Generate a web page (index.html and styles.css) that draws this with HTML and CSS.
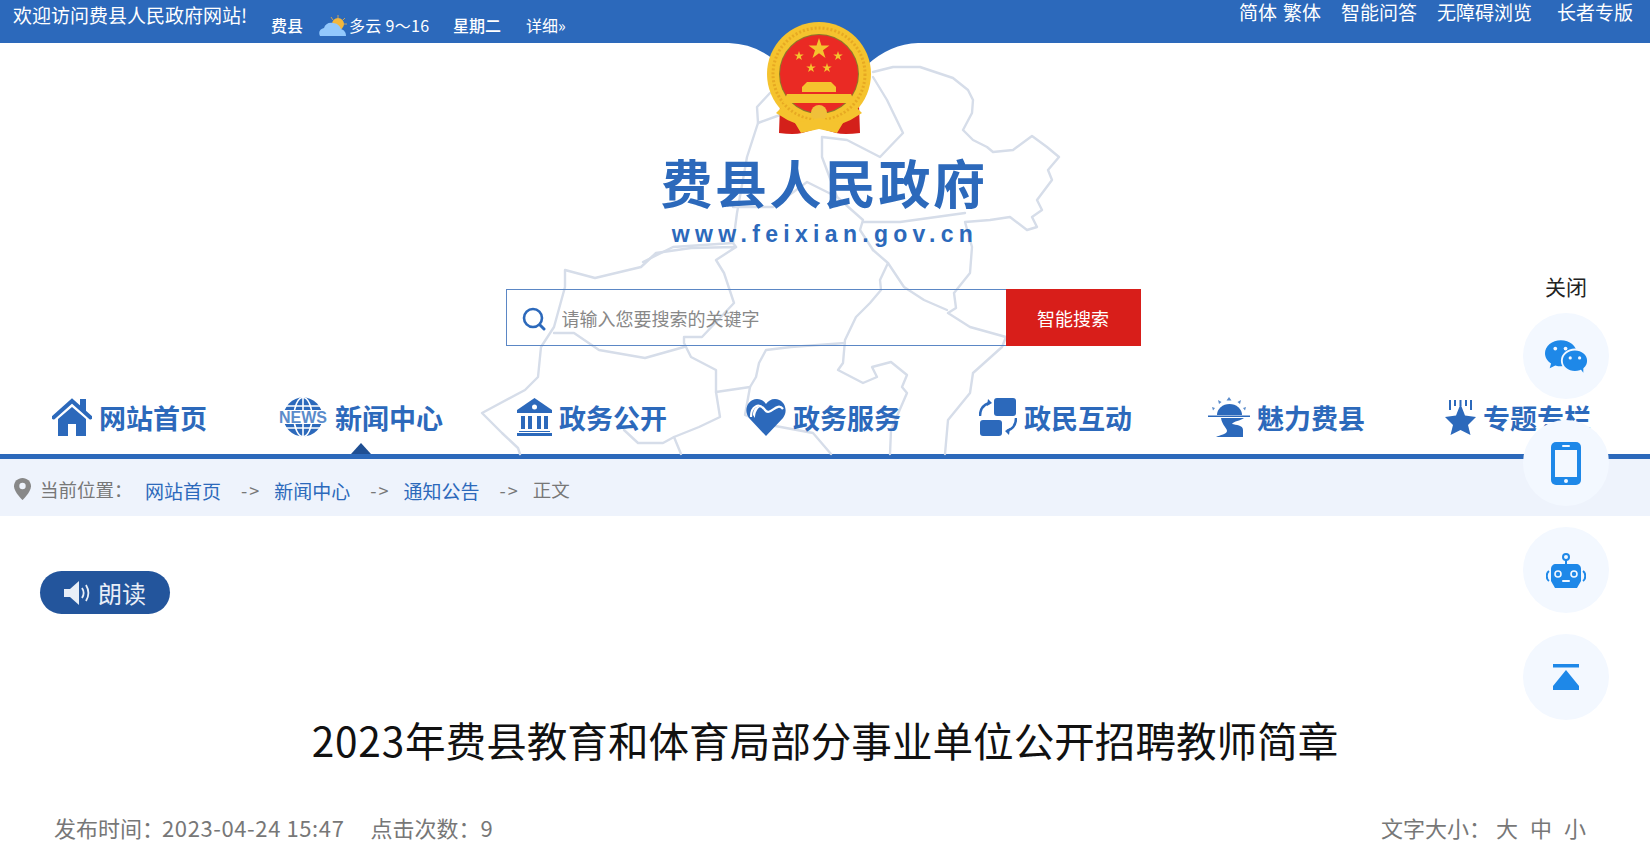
FILE: index.html
```html
<!DOCTYPE html>
<html lang="zh-CN">
<head>
  <meta charset="UTF-8">
  <title>2023年费县教育和体育局部分事业单位公开招聘教师简章</title>
  <link rel="stylesheet" href="styles.css">
</head>
<body>
  <svg class="defs" width="0" height="0">
    <defs>
      <polygon id="star" points="0,-1 .225,-.309 .951,-.309 .363,.118 .588,.809 0,.382 -.588,.809 -.363,.118 -.951,-.309 -.225,-.309"/>
    </defs>
  </svg>

  <div class="topbar">
    <div class="topbar-left">
      <span class="welcome">欢迎访问费县人民政府网站!</span>
      <div class="weather">
        <span class="bold-ish city">费县</span>
        <svg class="cloud" viewBox="0 0 28 21">
          <g stroke="#c9a35a" stroke-width="1"><path d="M19 0v3M12 2l2 3M26 3l-2 2M28 9h-3"/></g>
          <circle cx="19" cy="9" r="6" fill="#f4b73c"/>
          <path d="M1 21c-2-4 0-7 4-8 1-4 5-6 9-5 4 0 7 3 8 6 3 1 5 3 5 7z" fill="#93c8fc"/>
        </svg>
        <span class="temp">多云 9～16</span>
        <span class="bold-ish week">星期二</span>
        <span class="more">详细»</span>
      </div>
    </div>
    <div class="topbar-right">
      <a class="lang">简体</a>
      <a class="lang-last">繁体</a>
      <a class="tool">智能问答</a>
      <a class="tool">无障碍浏览</a>
      <a class="tool elder">长者专版</a>
    </div>
  </div>

  <header class="masthead">
    <svg class="map" viewBox="0 0 700 420">
      <g fill="none" stroke="#d6dde9" stroke-width="2.4" stroke-linejoin="round" stroke-linecap="round" transform="translate(-450 -43)">
        <polyline points="873,72 893,67 920,67 953,78 968,90 973,100 972,113 963,130 973,140 987,147 993,152 1013,150 1032,136 1047,147 1059,157 1048,170 1052,180 1037,200 1042,210 1032,217 1037,227 1027,230 1010,217 990,220 965,222 972,247 970,273 954,293 956,308 948,313 970,327 1006,337 1002,347 973,373 970,393 948,420 945,454"/>
        <polyline points="873,250 888,263 904,287 924,300 947,310"/>
        <polyline points="888,263 880,280 881,290 870,303 856,317 845,340 843,363 838,370 863,383 877,377 872,367 891,362 907,375 902,387 907,393 891,430 890,454"/>
        <polyline points="845,343 791,347 766,350 759,363 756,377 750,387 716,392 716,370 691,357 684,343 684,337 702,337 734,303 724,273 716,260 736,247 691,248 656,253 641,267 595,278 565,270 565,287 554,327 541,347 538,377 525,390 482,413 502,433 518,448 520,454"/>
        <polyline points="554,333 574,333 599,350 645,358 684,347"/>
        <polyline points="716,392 720,417 699,427 674,437 681,454"/>
        <polyline points="624,430 638,443 663,443 674,437"/>
        <polyline points="750,387 745,415 770,425 813,433 831,454"/>
        <polyline points="770,93 757,107 758,123 747,157 737,213 733,243 736,247"/>
        <polyline points="643,262 673,247 733,243"/>
        <polyline points="758,123 780,115"/>
        <polyline points="873,77 887,100 903,133 880,157 847,140 822,137 822,157 837,197 863,220 860,230 873,250"/>
        <polyline points="733,207 773,207 807,182 837,197"/>
        <polyline points="863,222 900,222 965,213"/>
      </g>
    </svg>

    <svg class="emblem" viewBox="0 0 200 125">
      <path d="M5 28Q31 29 50 45L60 28Z" fill="#2c69bb"/>
      <path d="M194 28Q166 29 143 50L130 28Z" fill="#2c69bb"/>
      <path d="M56 90L135 90L136 118Q120 120 112 118L95 113L78 118Q70 120 55 118Z" fill="#d4201a"/>
      <circle cx="95" cy="59" r="52" fill="#f5c32e"/>
      <circle cx="95" cy="59" r="46" fill="none" stroke="#e7a923" stroke-width="3" stroke-dasharray="2 2"/>
      <circle cx="95" cy="59" r="40" fill="#8b7a2a"/>
      <circle cx="95" cy="59" r="39" fill="#ea2a24"/>
      <g fill="#f5c32e">
        <use href="#star" transform="translate(95 34) scale(11)"/>
        <use href="#star" transform="translate(75 41) scale(5)"/>
        <use href="#star" transform="translate(114 41) scale(5)"/>
        <use href="#star" transform="translate(87 53) scale(5)"/>
        <use href="#star" transform="translate(103 53) scale(5)"/>
        <path d="M83 67h24l5 5v5H78v-5z"/>
        <path d="M63 79h64l4 9H59z"/>
      </g>
      <path d="M58 92Q95 120 132 92L138 98Q95 128 52 98Z" fill="#f5c32e"/>
      <circle cx="95" cy="98" r="8" fill="#f0c03a"/>
      <path d="M71 108L95 103L119 108L113 118L95 114L77 118Z" fill="#f5c32e"/>
    </svg>

    <h1 class="site-name">费县人民政府</h1>
    <p class="site-url">www.feixian.gov.cn</p>

    <form class="search">
      <svg class="search-icon" viewBox="0 0 24 24">
        <circle cx="11" cy="11" r="9" fill="none" stroke="#2c69bb" stroke-width="2.6"/>
        <path d="M18 18l4 4" stroke="#2c69bb" stroke-width="3" stroke-linecap="round"/>
      </svg>
      <input class="search-input" type="text" placeholder="请输入您要搜索的关键字">
      <button class="search-btn" type="button">智能搜索</button>
    </form>

    <nav class="nav">
      <a class="nav-item">
        <svg class="nav-icon" width="40" height="38" viewBox="0 0 40 38">
          <rect x="28" y="1" width="6" height="12" fill="#2c69bb"/>
          <path d="M1.500 19.500L20 3L38.500 19.500" fill="none" stroke="#2c69bb" stroke-width="4" stroke-linecap="round"/>
          <path d="M6 21L20 9L34 21V38H24V26H16V38H6Z" fill="#2c69bb"/>
        </svg>
        网站首页
      </a>
      <a class="nav-item active">
        <svg class="nav-icon news-icon" width="50" height="40" viewBox="0 0 50 40">
          <circle cx="25" cy="20" r="19.500" fill="#2c69bb"/>
          <g fill="none" stroke="#fff" stroke-width="1.600">
            <ellipse cx="25" cy="20" rx="9" ry="19.500"/>
            <path d="M25 0V40M7 9H43M7 31H43"/>
          </g>
          <rect x="0" y="13" width="50" height="14" fill="#fff"/>
          <text class="news-text" x="25" y="26" textLength="48" lengthAdjust="spacingAndGlyphs">NEWS</text>
        </svg>
        新闻中心
      </a>
      <a class="nav-item">
        <svg class="nav-icon" width="35" height="38" viewBox="0 0 35 38">
          <path d="M17.500 0L35 12V15H0V12Z" fill="#2c69bb"/>
          <circle cx="17.500" cy="9" r="2.500" fill="#fff"/>
          <path d="M4 18h4v13H4zM11 18h4v13h-4zM20 18h4v13h-4zM27 18h4v13h-4zM2 33h31v1H2zM0 35h35v3H0z" fill="#2c69bb"/>
        </svg>
        政务公开
      </a>
      <a class="nav-item">
        <svg class="nav-icon" width="40" height="38" viewBox="0 0 40 38">
          <path d="M20 38L3 20C-3 12 2 1 11 1C15 1 18 3 20 6C22 3 25 1 29 1C38 1 43 12 37 20Z" fill="#2c69bb"/>
          <path d="M5 19C5 8 13 4 19 12C24 19 31 3 37 11" fill="none" stroke="#fff" stroke-width="2.200"/>
          <path d="M7 17C7 11 10 8 14 9C11 11 9 15 9 20Z" fill="#fff"/>
        </svg>
        政务服务
      </a>
      <a class="nav-item">
        <svg class="nav-icon" width="38" height="38" viewBox="0 0 38 38">
          <rect x="15" y="0" width="22" height="18" rx="3" fill="#2c69bb"/>
          <rect x="1" y="22" width="22" height="16" rx="3" fill="#2c69bb"/>
          <path d="M1 18C1 12 4 7 10 5" fill="none" stroke="#2c69bb" stroke-width="2.500"/>
          <path d="M9 1l4 4-5 3z" fill="#2c69bb"/>
          <path d="M37 20C37 27 34 31 28 33" fill="none" stroke="#2c69bb" stroke-width="2.500"/>
          <path d="M30 37l-4-4 5-3z" fill="#2c69bb"/>
        </svg>
        政民互动
      </a>
      <a class="nav-item">
        <svg class="nav-icon" width="42" height="41" viewBox="0 0 42 41">
          <path d="M9 18A12.500 11 0 0 1 34 18Z" fill="#2c69bb"/>
          <path d="M0 18.500H42V20H0Z" fill="#2c69bb"/>
          <path d="M13 21H36C32 24 26 24 24 27C28 28 35 28 35 33V40H8C12 38 19 37 19 34C19 31 14 28 13 21Z" fill="#2c69bb"/>
          <path d="M21 0l2.500 3.500h-5zM10 3l3.500 2-2.500 2zM33 3l-3.500 2 2.500 2zM4 10l3 1-2 2.500zM38 10l-3 1 2 2.500z" fill="#5b8ccb"/>
        </svg>
        魅力费县
      </a>
      <a class="nav-item">
        <svg class="nav-icon" width="31" height="38" viewBox="0 0 31 38">
          <path d="M15.500 6L20 17.500L31 19L23 27L25.500 37L15.500 32L5.500 37L8 27L0 19L11 17.500Z" fill="#2c69bb"/>
          <path d="M4 2h2v10H4zM14.500 2h2v6h-2zM25 2h2v10h-2zM9 2h2v6H9zM20 2h2v6h-2z" fill="#2c69bb"/>
        </svg>
        专题专栏
      </a>
    </nav>
    <span class="nav-arrow"></span>
  </header>

  <div class="crumbs">
    <svg class="pin" viewBox="0 0 17 22">
      <path d="M8.500 0C3.800 0 0 3.600 0 8.200C0 14 8.500 22 8.500 22S17 14 17 8.200C17 3.600 13.200 0 8.500 0Z" fill="#888"/>
      <circle cx="8.500" cy="8" r="3.200" fill="#eef3fc"/>
    </svg>
    <span class="crumb-label">当前位置：</span>
    <a class="crumb-link">网站首页</a>
    <span class="crumb-sep">-&gt;</span>
    <a class="crumb-link">新闻中心</a>
    <span class="crumb-sep">-&gt;</span>
    <a class="crumb-link">通知公告</a>
    <span class="crumb-sep">-&gt;</span>
    <span class="crumb-now">正文</span>
  </div>

  <main class="article">
    <button class="read-btn" type="button">
      <svg class="read-icon" width="28" height="24" viewBox="0 0 28 24">
        <path d="M0 8H6L15 0V24L6 16H0Z" fill="#e8eef7"/>
        <path d="M18 7C20 10 20 14 18 17M22 4C25 9 25 15 22 20" fill="none" stroke="#e8eef7" stroke-width="1.800"/>
      </svg>
      朗读
    </button>
    <h2 class="article-title"><span class="title-year">2023</span>年费县教育和体育局部分事业单位公开招聘教师简章</h2>
    <div class="article-meta">
      <div class="meta-left">
        <span>发布时间：<span class="meta-date">2023-04-24 15:47</span></span>
        <span>点击次数：9</span>
      </div>
      <div class="meta-right">
        <span class="size-label">文字大小：</span>
        <a>大</a>
        <a>中</a>
        <a>小</a>
      </div>
    </div>
  </main>

  <aside class="side">
    <div class="side-close">关闭</div>
    <a class="side-btn">
      <svg width="43" height="33" viewBox="0 0 46 35">
        <path d="M17 0C7.600 0 0 6 0 14C0 18.500 2.500 22.500 6.500 25L5 30L11 27C13 27.600 15 28 17 28C27 28 34 21 34 14C34 6 26.400 0 17 0Z" fill="#1e88e8"/>
        <ellipse cx="32" cy="22" rx="14" ry="12" fill="#1e88e8" stroke="#f3f8ff" stroke-width="2"/>
        <path d="M38 31l3 4 0-6z" fill="#1e88e8"/>
        <circle cx="11" cy="9" r="2" fill="#f3f8ff"/>
        <circle cx="22" cy="9" r="2" fill="#f3f8ff"/>
        <circle cx="27" cy="19" r="1.700" fill="#f3f8ff"/>
        <circle cx="37" cy="19" r="1.700" fill="#f3f8ff"/>
      </svg>
    </a>
    <a class="side-btn">
      <svg width="30" height="43" viewBox="0 0 30 43">
        <rect width="30" height="43" rx="5" fill="#1e88e8"/>
        <rect x="4" y="8" width="22" height="27" fill="#f3f8ff"/>
        <rect x="11" y="3" width="8" height="2" rx="1" fill="#f3f8ff"/>
        <circle cx="15" cy="39" r="2" fill="#f3f8ff"/>
      </svg>
    </a>
    <a class="side-btn">
      <svg width="40" height="35" viewBox="0 0 40 35">
        <circle cx="20" cy="4" r="3" fill="none" stroke="#1e88e8" stroke-width="2"/>
        <path d="M20 7V12" stroke="#1e88e8" stroke-width="2"/>
        <path d="M10 11H30C33 11 35 13 35 16V28L31 35H9L5 28V16C5 13 7 11 10 11Z" fill="#1e88e8"/>
        <path d="M3 18C0 20 0 26 3 28M37 18C40 20 40 26 37 28" fill="none" stroke="#1e88e8" stroke-width="2"/>
        <circle cx="12" cy="21" r="3" fill="#1e88e8" stroke="#f3f8ff" stroke-width="1.600"/>
        <circle cx="28" cy="21" r="3" fill="#1e88e8" stroke="#f3f8ff" stroke-width="1.600"/>
        <rect x="16" y="27" width="8" height="2" rx="1" fill="#f3f8ff"/>
      </svg>
    </a>
    <a class="side-btn">
      <svg width="26" height="26" viewBox="0 0 26 26">
        <rect width="26" height="3.500" fill="#1e88e8"/>
        <path d="M13 6L26 22V26H0V22Z" fill="#1e88e8"/>
      </svg>
    </a>
  </aside>
</body>
</html>
```

FILE: styles.css
```css
:root {
  --blue: #2c69bb;
  --grey: #777;
}

* {
  box-sizing: border-box;
  margin: 0;
  padding: 0;
}

html, body {
  height: 855px;
  overflow: hidden;
}

body {
  font-family: "Noto Sans CJK SC", "Noto Sans", sans-serif;
  background-color: #fff;
  color: #222;
  position: relative;
}

.defs {
  position: absolute;
}

/* top bar */
.topbar {
  height: 43px;
  background-color: var(--blue);
  color: #fff;
  display: flex;
  justify-content: space-between;
  position: relative;
  z-index: 1;
}

.topbar-left {
  display: flex;
  padding-left: 13px;
}

.welcome {
  font-size: 19px;
  line-height: 30px;
  width: 258px;
}

.weather {
  display: flex;
  align-items: center;
  font-size: 16px;
  height: 21px;
  margin-top: 14px;
}

.bold-ish {
  font-weight: 500;
}

.city {
  width: 48px;
}

.cloud {
  width: 28px;
  height: 21px;
  margin-right: 2px;
  margin-top: 2px;
}

.temp {
  width: 104px;
  letter-spacing: .3px;
}

.week {
  width: 73px;
}

.topbar-right {
  display: flex;
  font-size: 19px;
  line-height: 24px;
  padding-right: 16px;
}

.lang {
  margin-right: 6px;
}

.lang-last {
  margin-right: 20px;
}

.tool {
  margin-right: 20px;
}

.tool.elder {
  margin-left: 5px;
  margin-right: 1px;
}

/* header */
.masthead {
  height: 411px;
  position: relative;
  display: flex;
  flex-direction: column;
  align-items: center;
}

.map {
  position: absolute;
  left: 450px;
  top: 0;
  width: 700px;
  height: 420px;
  filter: blur(.6px);
}

.emblem {
  position: absolute;
  left: 724px;
  top: -28px;
  width: 200px;
  height: 125px;
  z-index: 2;
}

.site-name {
  position: relative;
  margin-top: 109px;
  font-size: 52px;
  line-height: 60px;
  font-weight: 700;
  letter-spacing: 2.5px;
  color: var(--blue);
  transform: translateX(-1px);
}

.site-url {
  position: relative;
  margin-top: 7px;
  font-family: "Liberation Sans", sans-serif;
  font-size: 23px;
  line-height: 30px;
  font-weight: 700;
  letter-spacing: 5.3px;
  color: var(--blue);
}

.search {
  position: relative;
  display: flex;
  align-items: center;
  width: 635px;
  height: 57px;
  margin-top: 40px;
  margin-left: -4px;
  border: 1px solid #5b87c5;
  padding-left: 15px;
}

.search-icon {
  width: 24px;
  height: 24px;
  flex: none;
  margin-top: 2px;
}

.search-input {
  flex: 1;
  min-width: 0;
  height: 100%;
  border: none;
  outline: none;
  background: transparent;
  padding-left: 16px;
  font-family: inherit;
  font-size: 18px;
}

.search-input::placeholder {
  color: #888;
  opacity: 1;
}

.search-btn {
  width: 135px;
  height: 57px;
  margin: -1px;
  border: none;
  background-color: #d81e1a;
  color: #fff;
  font-family: inherit;
  font-size: 18px;
}

.nav {
  position: relative;
  width: 100%;
  margin-top: auto;
  padding: 0 0 17px 52px;
  display: grid;
  grid-template-columns: 226px 239px 229px 233px 229px 237px auto;
  align-items: center;
}

.nav-item {
  display: flex;
  align-items: center;
  gap: 7px;
  height: 40px;
  font-size: 27px;
  font-weight: 700;
  color: var(--blue);
}

.nav-icon {
  flex: none;
}

.news-icon {
  overflow: visible;
}

.news-text {
  font-family: "Liberation Sans", sans-serif;
  font-size: 17px;
  fill: #5b8ccb;
  text-anchor: middle;
}

.nav-arrow {
  position: absolute;
  left: 351px;
  bottom: 0;
  border-left: 10px solid transparent;
  border-right: 10px solid transparent;
  border-bottom: 11px solid #1f4f93;
}

/* breadcrumb */
.crumbs {
  height: 62px;
  border-top: 5px solid var(--blue);
  background-color: #eef3fc;
  display: flex;
  align-items: center;
  padding: 5px 0 0 14px;
  font-size: 19px;
  color: var(--grey);
}

.pin {
  width: 17px;
  height: 22px;
  margin-right: 9px;
  margin-top: -3px;
}

.crumb-label {
  width: 105px;
  font-size: 18.5px;
  margin-top: -3px;
}

.crumb-link {
  color: var(--blue);
}

.crumb-sep {
  margin: 0 13px 0 20px;
  font-size: 18px;
  letter-spacing: 2px;
}

.crumb-now {
  margin-top: -2px;
  font-size: 18.5px;
}

/* article */
.article {
  padding-top: 55px;
}

.read-btn {
  display: flex;
  align-items: center;
  gap: 6px;
  width: 130px;
  height: 43px;
  margin-left: 40px;
  padding-left: 24px;
  border: none;
  border-radius: 22px;
  background-color: #23559c;
  color: #e8eef7;
  font-family: inherit;
  font-size: 24px;
}

.article-title {
  margin-top: 96px;
  text-align: center;
  font-size: 40.6px;
  line-height: 60px;
  font-weight: 400;
  color: #111;
}

.title-year {
  letter-spacing: .8px;
}

.article-meta {
  display: flex;
  justify-content: space-between;
  margin-top: 42px;
  padding: 0 64px 0 54px;
  font-size: 22px;
  line-height: 30px;
  color: var(--grey);
}

.meta-left {
  display: flex;
  gap: 26px;
}

.meta-date {
  margin-left: -2px;
  letter-spacing: .6px;
}

.meta-right {
  display: flex;
  gap: 12px;
}

.size-label {
  margin-right: -7px;
}

/* floating side buttons */
.side {
  position: absolute;
  right: 41px;
  top: 271px;
  width: 86px;
  z-index: 3;
  display: flex;
  flex-direction: column;
  align-items: center;
  gap: 21px;
}

.side-close {
  font-size: 21px;
  line-height: 30px;
  margin-bottom: -9px;
  color: #222;
}

.side-btn {
  width: 86px;
  height: 86px;
  border-radius: 50%;
  background-color: #f3f8ff;
  display: flex;
  align-items: center;
  justify-content: center;
}
```
